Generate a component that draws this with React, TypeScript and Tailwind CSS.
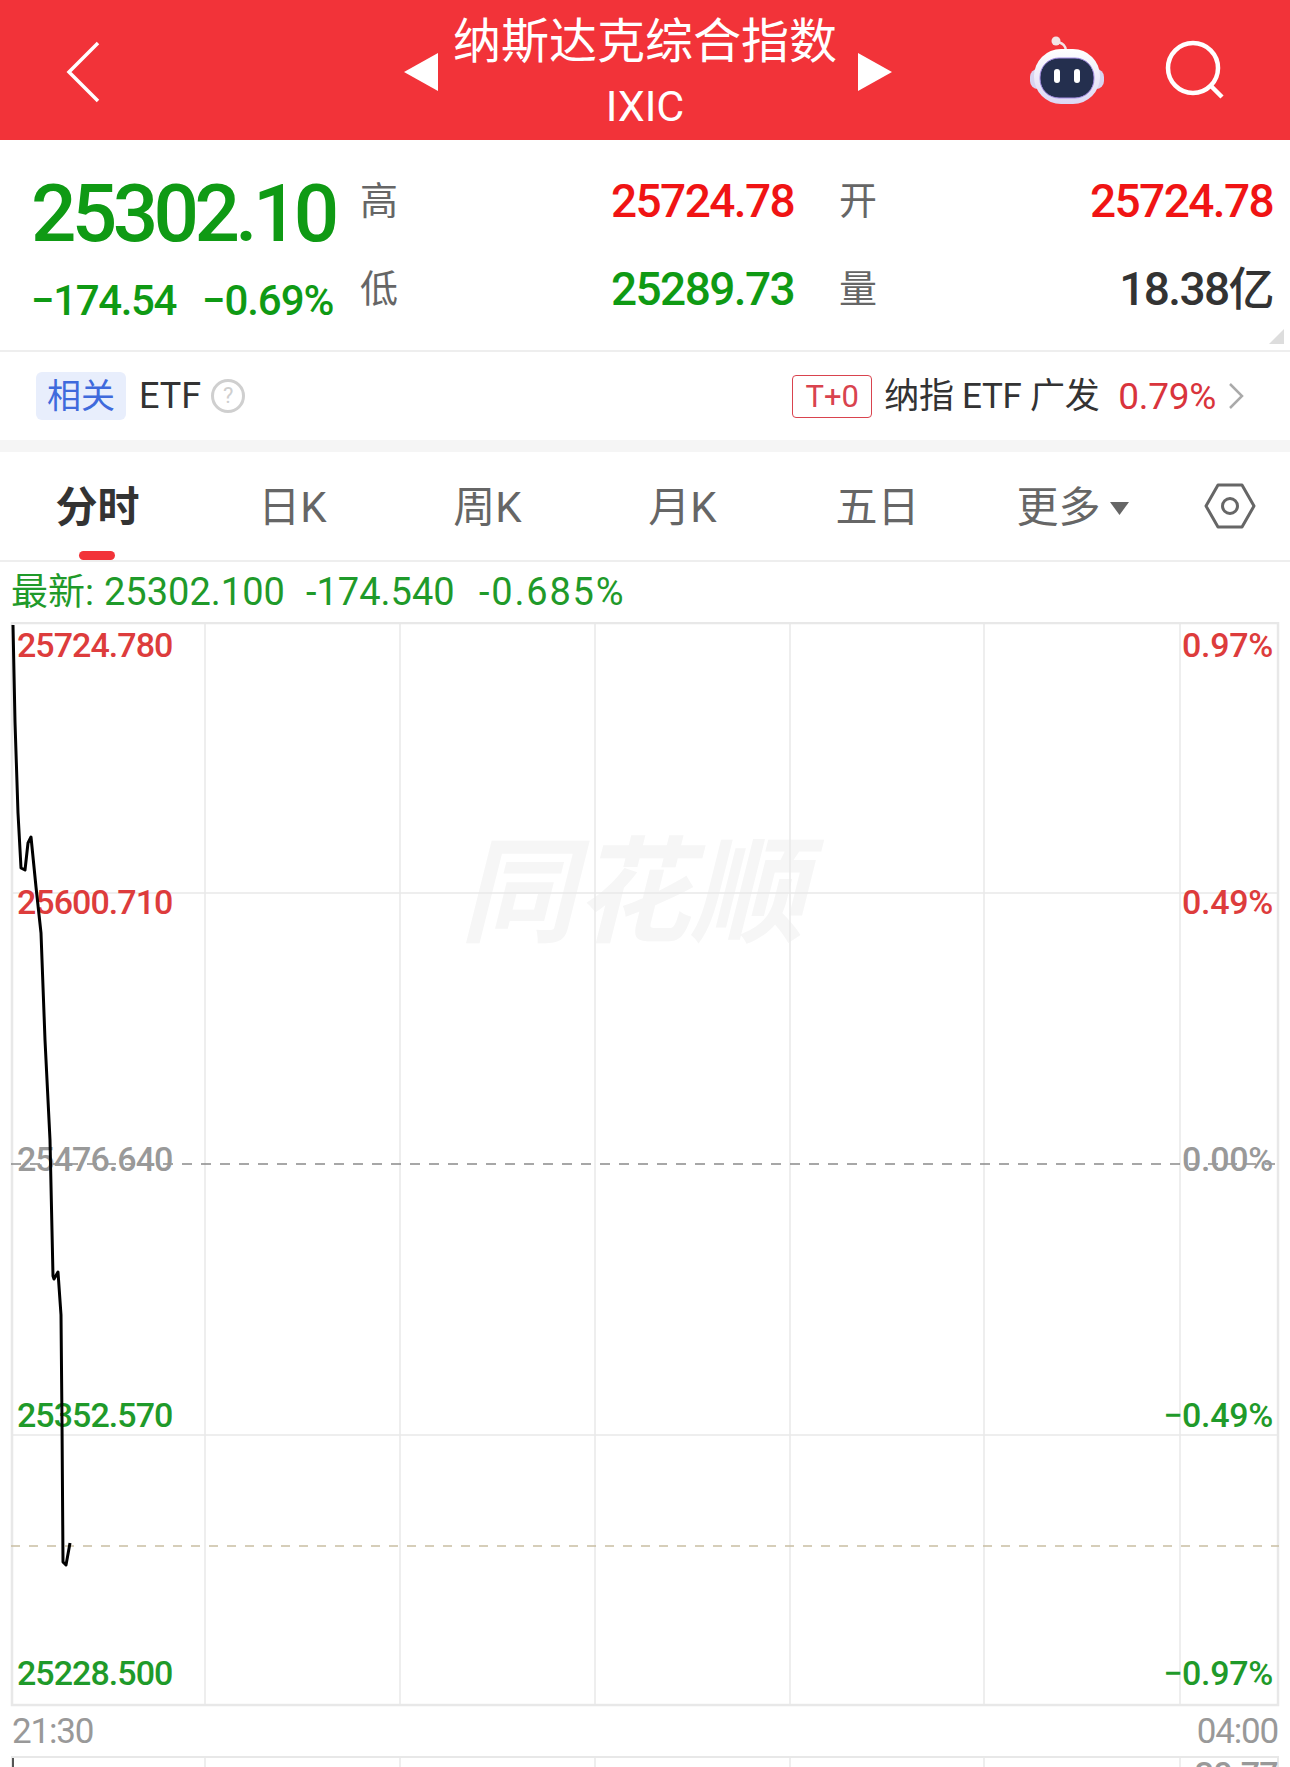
import React from 'react';

const tabs = ['日K', '周K', '月K', '五日'];

// chart coords are page coords minus the chart's top (622)
const pricePath = [
  [13, 3], [15, 100], [18, 191], [21, 246], [25, 248], [28, 221], [31, 215], [36, 265], [41, 311],
  [45, 418], [50, 518], [53, 654], [54, 657], [58, 650], [61, 693], [62, 800], [63, 940], [66, 943], [70, 921],
].map((p) => p.join(',')).join(' ');

const vLines = [205, 400, 595, 790, 984, 1180];

function Stat({ label, value, color }: { label: string; value: string; color: string }) {
  return (
    <>
      <span className="w-[38px] text-[38px] leading-none text-[#666]">{label}</span>
      <span className={`w-[396px] text-right text-[46px] leading-none font-medium tracking-[-1.6px] ${color}`}>{value}</span>
    </>
  );
}

function ChartLabel({ top, right, color, children }: { top: string; right?: boolean; color: string; children: React.ReactNode }) {
  return (
    <span className={`absolute ${top} ${right ? 'right-[17px] tracking-[-0.3px]' : 'left-[17px] tracking-[-0.95px]'} text-[34px] leading-[34px] font-medium ${color}`}>
      {children}
    </span>
  );
}

export default function App() {
  return (
    <div className="w-[1290px] h-[1767px] overflow-hidden bg-white font-[Roboto,'Noto_Sans_CJK_SC',sans-serif]">
      {/* header */}
      <div className="h-[140px] bg-[#f23339] grid grid-cols-[1fr_auto_1fr] items-center text-white">
        <svg className="ml-[65px] mt-[4px]" width="36" height="62" viewBox="0 0 36 62" fill="none">
          <path d="M33 2 L4 31 L33 60" stroke="#fff" strokeWidth="3.5" />
        </svg>
        <div className="flex items-center ml-[6px] mt-[3px]">
          <svg width="34" height="38" viewBox="0 0 34 38"><path d="M0 19 L34 0 V38 Z" fill="#fff" /></svg>
          <div className="w-[420px] pr-[6px] flex flex-col items-center">
            <span className="text-[48px] leading-[48px] whitespace-nowrap">纳斯达克综合指数</span>
            <span className="text-[43px] leading-[40px] mt-[20px]">IXIC</span>
          </div>
          <svg width="34" height="38" viewBox="0 0 34 38"><path d="M34 19 L0 0 V38 Z" fill="#fff" /></svg>
        </div>
        <div className="flex items-center justify-end">
          <svg className="mr-[60px]" width="76" height="68" viewBox="0 0 76 68">
            <defs>
              <linearGradient id="shell" x1="0" y1="0" x2="0" y2="1">
                <stop offset="0" stopColor="#ffffff" />
                <stop offset="1" stopColor="#dcd8f4" />
              </linearGradient>
            </defs>
            <path d="M37 15 C37 9 33 7 29 6" stroke="#f3e4e6" strokeWidth="2.5" fill="none" />
            <circle cx="27" cy="5" r="4.5" fill="#f3e4e6" />
            <rect x="1" y="33" width="74" height="20" rx="8" fill="#d8d4f0" />
            <rect x="5" y="13" width="66" height="55" rx="27" fill="url(#shell)" />
            <rect x="11" y="22" width="54" height="40" rx="19" fill="#242f4e" stroke="#a78fe6" strokeWidth="1" />
            <rect x="25" y="33" width="6" height="14" rx="3" fill="#fff" />
            <rect x="45" y="33" width="6" height="14" rx="3" fill="#fff" />
          </svg>
          <svg className="mr-[65px]" width="60" height="60" viewBox="0 0 60 60" fill="none">
            <circle cx="28" cy="28" r="25" stroke="#fff" strokeWidth="4.5" />
            <path d="M46 46 L57 57" stroke="#fff" strokeWidth="4.5" />
          </svg>
        </div>
      </div>

      {/* quote block */}
      <div className="relative h-[212px] flex border-b-2 border-[#eeeeee]">
        <div className="w-[360px] pl-[31px] pt-[34px]">
          <div className="text-[80px] leading-[80px] font-medium tracking-[-4.6px] text-[#0f9a14] whitespace-nowrap">25302.10</div>
          <div className="mt-[23px] flex text-[42px] leading-[48px] font-medium tracking-[-1.1px] text-[#0f9a14]">
            <span className="w-[171px] tracking-[-1.4px]">−174.54</span>
            <span>−0.69%</span>
          </div>
        </div>
        <div className="flex-1 pt-[41px]">
          <div className="flex items-center h-[40px]">
            <Stat label="高" value="25724.78" color="text-[#f01414]" />
            <span className="w-[45px]" />
            <Stat label="开" value="25724.78" color="text-[#f01414]" />
          </div>
          <div className="flex items-center h-[40px] mt-[48px]">
            <Stat label="低" value="25289.73" color="text-[#0f9a14]" />
            <span className="w-[45px]" />
            <Stat label="量" value="18.38亿" color="text-[#333]" />
          </div>
        </div>
        <svg className="absolute right-[6px] bottom-[6px]" width="15" height="15" viewBox="0 0 15 15"><path d="M15 0 V15 H0 Z" fill="#ddd" /></svg>
      </div>

      {/* related ETF */}
      <div className="h-[88px] flex items-center pl-[36px] pr-[46px] text-[35px] leading-none text-[#333] border-b-[12px] border-[#f5f5f5] box-content">
        <span className="w-[90px] h-[48px] rounded-[6px] bg-[#e8eefc] text-[#3f6adc] text-[34px] flex items-center justify-center">相关</span>
        <span className="ml-[13px] text-[36px]">ETF</span>
        <span className="ml-[10px] w-[34px] h-[34px] rounded-full border-[3px] border-[#cfcfcf] text-[#cfcfcf] text-[22px] flex items-center justify-center">?</span>
        <span className="ml-auto w-[80px] h-[43px] rounded-[4px] border border-[#d9434e] text-[#d9434e] text-[31px] flex items-center justify-center">T+0</span>
        <span className="ml-[12px] w-[215px] whitespace-nowrap tracking-[-0.3px]">纳指 ETF 广发</span>
        <span className="ml-[19px] text-[#d9343c] text-[37px] tracking-[-0.3px]">0.79%</span>
        <svg className="ml-[12px]" width="16" height="26" viewBox="0 0 16 26" fill="none"><path d="M2 1 L14 13 L2 25" stroke="#aaa" strokeWidth="2.5" /></svg>
      </div>

      {/* tabs */}
      <div className="relative h-[108px] flex items-center border-b-2 border-[#eeeeee] box-content text-[42px] leading-none text-[#666]">
        <div className="relative w-[195px] h-full flex items-center justify-center pt-[4px] font-bold text-[#333]">
          分时
          <span className="absolute bottom-0 left-[79px] w-[36px] h-[9px] rounded-full bg-[#f23339]" />
        </div>
        {tabs.map((t) => (
          <div key={t} className="w-[195px] text-center pt-[4px]">{t}</div>
        ))}
        <div className="w-[195px] flex items-center justify-center pt-[4px]">
          更多
          <svg className="ml-[9px]" width="19" height="13" viewBox="0 0 19 13"><path d="M0 0 H19 L9.5 13 Z" fill="#666" /></svg>
        </div>
        <div className="flex-1 flex justify-center">
          <svg width="52" height="46" viewBox="0 0 52 46" fill="none">
            <path d="M14 2 H38 L50 23 L38 44 H14 L2 23 Z" stroke="#666" strokeWidth="3" strokeLinejoin="round" />
            <circle cx="26" cy="23" r="7.5" stroke="#666" strokeWidth="3" />
          </svg>
        </div>
      </div>

      {/* latest */}
      <div className="h-[60px] flex items-center pl-[11px] text-[38px] leading-none text-[#1f9a2a]">
        <span className="w-[93px] text-[37px]">最新:</span>
        <span className="w-[202px]">25302.100</span>
        <span className="w-[173px]">-174.540</span>
        <span className="tracking-[1.8px]">-0.685%</span>
      </div>

      {/* main chart */}
      <div className="relative h-[1085px]">
        <span className="absolute left-[460px] top-[214px] text-[115px] leading-[115px] font-bold italic text-[#f6f6f6] whitespace-nowrap">同花顺</span>
        <svg className="absolute inset-0" width="1290" height="1085" viewBox="0 0 1290 1085" fill="none">
          {vLines.map((x) => (
            <line key={x} x1={x} x2={x} y1="0" y2="1083" stroke="#e8e8e8" strokeWidth="1.5" />
          ))}
          <line x1="11" x2="1279" y1="271" y2="271" stroke="#e8e8e8" strokeWidth="1.5" />
          <line x1="11" x2="1279" y1="813" y2="813" stroke="#e8e8e8" strokeWidth="1.5" />
          <rect x="12" y="1" width="1266" height="1082" stroke="#e8e8e8" strokeWidth="2.5" />
          <line x1="11" x2="1279" y1="542" y2="542" stroke="#8a8a8a" strokeWidth="1.5" strokeDasharray="10 9" />
          <line x1="11" x2="1279" y1="924" y2="924" stroke="#c9bfa3" strokeWidth="1.5" strokeDasharray="9 9" />
        </svg>
        <ChartLabel top="top-[6px]" color="text-[#dd3c3c]">25724.780</ChartLabel>
        <ChartLabel top="top-[263px]" color="text-[#dd3c3c]">25600.710</ChartLabel>
        <ChartLabel top="top-[520px]" color="text-[#999]">25476.640</ChartLabel>
        <ChartLabel top="top-[776px]" color="text-[#1f9a2a]">25352.570</ChartLabel>
        <ChartLabel top="top-[1034px]" color="text-[#1f9a2a]">25228.500</ChartLabel>
        <ChartLabel top="top-[6px]" right color="text-[#dd3c3c]">0.97%</ChartLabel>
        <ChartLabel top="top-[263px]" right color="text-[#dd3c3c]">0.49%</ChartLabel>
        <ChartLabel top="top-[520px]" right color="text-[#999]">0.00%</ChartLabel>
        <ChartLabel top="top-[776px]" right color="text-[#1f9a2a]">−0.49%</ChartLabel>
        <ChartLabel top="top-[1034px]" right color="text-[#1f9a2a]">−0.97%</ChartLabel>
        <svg className="absolute inset-0" width="1290" height="1085" viewBox="0 0 1290 1085" fill="none">
          <polyline points={pricePath} stroke="#000" strokeWidth="3" strokeLinejoin="round" />
        </svg>
      </div>

      {/* time axis */}
      <div className="h-[49px] flex items-center justify-between px-[12px] text-[35px] leading-none tracking-[-1.2px] text-[#999]">
        <span>21:30</span>
        <span>04:00</span>
      </div>

      {/* volume chart, cut off by the screen edge */}
      <div className="relative h-[11px] overflow-hidden">
        <svg className="absolute inset-0" width="1290" height="11" viewBox="0 0 1290 11" fill="none">
          {vLines.map((x) => (
            <line key={x} x1={x} x2={x} y1="0" y2="11" stroke="#e8e8e8" strokeWidth="1.5" />
          ))}
          <rect x="12" y="1" width="1266" height="40" stroke="#e8e8e8" strokeWidth="2" />
          <line x1="13" x2="13" y1="2" y2="11" stroke="#555" strokeWidth="2" />
        </svg>
        <span className="absolute right-[12px] top-[1px] text-[34px] leading-[34px] font-medium tracking-[-0.7px] text-[#999]">30.77</span>
      </div>
    </div>
  );
}
